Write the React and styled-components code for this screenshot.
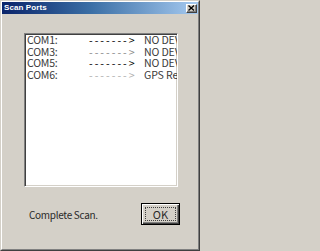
import React from "react";
import styled, { createGlobalStyle } from "styled-components";

const Global = createGlobalStyle`
  html, body { margin: 0; padding: 0; background: #d4d0c8; }
  body { width: 200px; height: 251px; overflow: hidden; }
`;

const uiFont = `"Noto Sans CJK JP", "Liberation Sans", Arial, sans-serif`;

const Window = styled.div`
  box-sizing: border-box;
  width: 200px;
  height: 251px;
  background: #d4d0c8;
  border-style: solid;
  border-width: 1px;
  border-color: #d4d0c8 #404040 #404040 #d4d0c8;
  display: flex;
  flex-direction: column;
  font-family: "Liberation Sans", Arial, sans-serif;
`;

const Inner = styled.div`
  flex: 1;
  display: flex;
  flex-direction: column;
  border-style: solid;
  border-width: 1px;
  border-color: #ffffff #808080 #808080 #ffffff;
`;

const TitleBar = styled.div`
  height: 12px;
  display: flex;
  align-items: center;
  justify-content: space-between;
  padding: 0 1px 0 2px;
  background: linear-gradient(to right, #0a246a 0%, #3a6ea5 45%, #a6caf0 100%);
`;

const Title = styled.span`
  color: #ffffff;
  font-weight: bold;
  font-size: 8px;
  letter-spacing: 0.1px;
  line-height: 12px;
`;

const CloseButton = styled.div`
  box-sizing: border-box;
  width: 11px;
  height: 9px;
  background: #d4d0c8;
  border-style: solid;
  border-width: 1px;
  border-color: #ffffff #404040 #404040 #ffffff;
  box-shadow: inset -1px -1px 0 #808080;
  display: flex;
  align-items: center;
  justify-content: center;
`;

const Body = styled.div`
  flex: 1;
  display: flex;
  flex-direction: column;
  padding: 19px 0 0 22px;
`;

const ListBox = styled.div`
  box-sizing: border-box;
  width: 154px;
  height: 154px;
  background: #ffffff;
  border-style: solid;
  border-width: 1px;
  border-color: #808080 #ffffff #ffffff #808080;
  box-shadow: inset 1px 1px 0 #404040, inset -1px -1px 0 #d4d0c8;
  overflow: hidden;
  padding: 0 0 0 2px;
  display: flex;
  flex-direction: column;
`;

const Row = styled.div`
  display: grid;
  grid-template-columns: 62px 55px 60px;
  height: 11.67px;
  align-items: center;
  font-family: ${uiFont};
  font-size: 10.6px;
  line-height: 11.67px;
  white-space: nowrap;
  color: #3a3a3a;
  overflow: visible;
`;

const Port = styled.span`
  letter-spacing: -0.25px;
`;

const Arrow = styled.span`
  color: ${(p) => p.$tone};
  letter-spacing: 2px;
`;

const Result = styled.span`
  letter-spacing: -0.15px;
`;

const Footer = styled.div`
  display: flex;
  align-items: center;
  margin-top: 16px;
  width: 156px;
  justify-content: space-between;
`;

const Status = styled.span`
  font-family: ${uiFont};
  font-size: 10px;
  letter-spacing: -0.3px;
  color: #2a2a2a;
  padding-left: 5px;
`;

const Button = styled.div`
  box-sizing: border-box;
  width: 39px;
  height: 22px;
  background: #d4d0c8;
  border: 1px solid #000000;
  box-shadow: inset 1px 1px 0 #ffffff, inset -1px -1px 0 #404040, inset -2px -2px 0 #808080;
  display: flex;
  align-items: center;
  justify-content: center;
  padding: 3px;
`;

const Focus = styled.div`
  box-sizing: border-box;
  width: 100%;
  height: 100%;
  border: 1px dotted #404040;
  display: flex;
  align-items: center;
  justify-content: center;
  font-family: ${uiFont};
  font-size: 11px;
  line-height: 1;
  color: #2a2a2a;
`;

const rows = [
  { port: "COM1:", tone: "#000000", result: "NO DEVICE" },
  { port: "COM3:", tone: "#8a8a8a", result: "NO DEVICE" },
  { port: "COM5:", tone: "#000000", result: "NO DEVICE" },
  { port: "COM6:", tone: "#b0b0b0", result: "GPS Receiver" },
];

export default function App() {
  return (
    <>
      <Global />
      <Window>
        <Inner>
          <TitleBar>
            <Title>Scan Ports</Title>
            <CloseButton>
              <svg width="7" height="6" viewBox="0 0 7 6">
                <path d="M0.5 0.5 L6 5.5 M6 0.5 L0.5 5.5" stroke="#000" strokeWidth="1.3" />
              </svg>
            </CloseButton>
          </TitleBar>
          <Body>
            <ListBox>
              {rows.map((r) => (
                <Row key={r.port}>
                  <Port>{r.port}</Port>
                  <Arrow $tone={r.tone}>-------&gt;</Arrow>
                  <Result>{r.result}</Result>
                </Row>
              ))}
            </ListBox>
            <Footer>
              <Status>Complete Scan.</Status>
              <Button>
                <Focus>OK</Focus>
              </Button>
            </Footer>
          </Body>
        </Inner>
      </Window>
    </>
  );
}
